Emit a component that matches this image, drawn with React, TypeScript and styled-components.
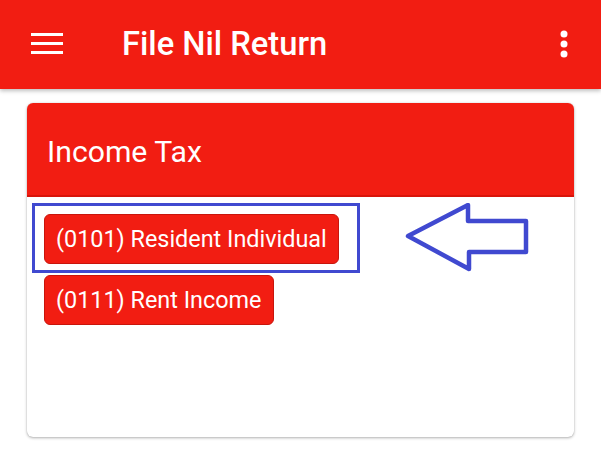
import React from 'react';
import styled, { createGlobalStyle } from 'styled-components';

const RED = '#f21d12';
const BLUE = '#4049d0';

const items = ['(0101) Resident Individual', '(0111) Rent Income'];

const App: React.FC = () => {
  return (
    <Page>
      <GlobalStyle />
      <AppBar>
        <IconButton aria-label="menu">
          <svg width="32" height="21" viewBox="0 0 32 21">
            <rect x="0" y="0" width="32" height="3" fill="#fff" />
            <rect x="0" y="9" width="32" height="3" fill="#fff" />
            <rect x="0" y="18" width="32" height="3" fill="#fff" />
          </svg>
        </IconButton>
        <Title>File Nil Return</Title>
        <IconButton aria-label="more">
          <svg width="8" height="28" viewBox="0 0 8 28">
            <circle cx="4" cy="4" r="3.5" fill="#fff" />
            <circle cx="4" cy="14" r="3.5" fill="#fff" />
            <circle cx="4" cy="24" r="3.5" fill="#fff" />
          </svg>
        </IconButton>
      </AppBar>

      <Card>
        <CardHeader>Income Tax</CardHeader>
        <CardBody>
          <Highlight>
            <ReturnButton>{items[0]}</ReturnButton>
          </Highlight>
          <ReturnButton $indent>{items[1]}</ReturnButton>

          {/* annotation arrow */}
          <Arrow width="130" height="72" viewBox="0 0 130 72">
            <polygon
              points="5,33 65,2 65,18 123,18 123,49 66,49 66,66"
              fill="none"
              stroke={BLUE}
              strokeWidth="4.5"
              strokeLinejoin="round"
            />
          </Arrow>
        </CardBody>
      </Card>
    </Page>
  );
};

// Styled Components
const GlobalStyle = createGlobalStyle`
  html, body {
    margin: 0;
    padding: 0;
    background: #fff;
  }
  body {
    font-family: Roboto, "Noto Sans", sans-serif;
  }
`;

const Page = styled.div`
  width: 601px;
  height: 455px;
  overflow: hidden;
  background: #fff;
`;

const AppBar = styled.header`
  display: flex;
  align-items: center;
  height: 89px;
  padding: 0 33px 2px 31px;
  box-sizing: border-box;
  background: ${RED};
  box-shadow: 0 2px 4px rgba(0, 0, 0, 0.25);
  color: #fff;
  position: relative;
  z-index: 1;
`;

const IconButton = styled.div`
  display: flex;
  align-items: center;
  justify-content: center;
`;

const Title = styled.h1`
  flex: 1;
  margin: 0 0 0 59px;
  font-size: 32.7px;
  font-weight: 500;
`;

const Card = styled.section`
  margin: 14px 27px 0;
  height: 334px;
  border-radius: 6px;
  background: #fff;
  box-shadow: 0 1px 3px rgba(0, 0, 0, 0.3), 0 0 1px rgba(0, 0, 0, 0.2);
  overflow: hidden;
`;

const CardHeader = styled.div`
  display: flex;
  align-items: center;
  height: 94px;
  padding: 4px 0 0 20px;
  box-sizing: border-box;
  background: ${RED};
  border-bottom: 2px solid #d8140a;
  color: #fff;
  font-size: 30.2px;
  font-weight: 400;
`;

const CardBody = styled.div`
  position: relative;
  display: flex;
  flex-direction: column;
  align-items: flex-start;
  gap: 2px;
  padding: 6px 0 0 5px;
`;

const Highlight = styled.div`
  display: inline-flex;
  padding: 8px 18px 6px 9px;
  border: 3px solid ${BLUE};
`;

const ReturnButton = styled.button<{ $indent?: boolean }>`
  height: 50px;
  margin-left: ${(p) => (p.$indent ? '12px' : '0')};
  padding: 0 11px;
  border: 1px solid #c8150c;
  border-radius: 6px;
  background: ${RED};
  color: #fff;
  font-family: Roboto, "Noto Sans", sans-serif;
  font-size: 23.4px;
  font-weight: 400;
  cursor: pointer;
`;

const Arrow = styled.svg`
  position: absolute;
  left: 376px;
  top: 6px;
`;

export default App;
